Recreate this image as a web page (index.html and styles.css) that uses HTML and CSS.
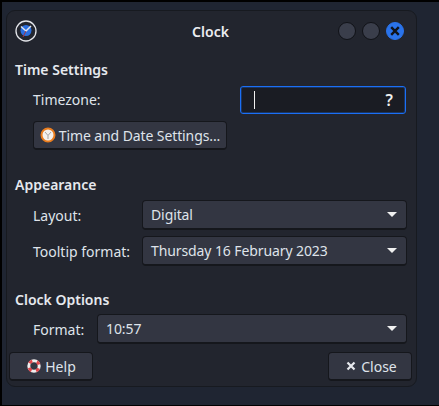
FILE: index.html
```html
<!DOCTYPE html>
<html lang="en">
<head>
	<meta charset="UTF-8">
	<title>Clock</title>
	<link rel="stylesheet" href="styles.css">
</head>
<body>
	<div class="window">
		<div class="titlebar">
			<svg class="app-icon" width="22" height="22" viewBox="0 0 22 22">
				<circle cx="11" cy="11" r="10" fill="#23262f" stroke="#e4e6ea" stroke-width="1.3"/>
				<circle cx="11" cy="10.5" r="5.5" fill="#2a6fe0"/>
				<path d="M6 6.5L11 11L16 6" fill="none" stroke="#dfe4ee" stroke-width="1.5"/>
				<path d="M11 11L8 17" stroke="#a8323c" stroke-width="1"/>
			</svg>
			<div class="title">Clock</div>
			<div class="win-btns">
				<span class="win-btn"></span>
				<span class="win-btn"></span>
				<span class="win-btn close">
					<svg width="10" height="10" viewBox="0 0 10 10"><path d="M1.2 1.2L8.8 8.8M8.8 1.2L1.2 8.8" stroke="#10131a" stroke-width="2.4"/></svg>
				</span>
			</div>
		</div>

		<h2 class="heading first">Time Settings</h2>
		<div class="row zone-row">
			<label class="zone-label">Timezone:</label>
			<div class="input"><span class="caret"></span><span class="hint">?</span></div>
		</div>
		<button class="btn settings-btn">
			<svg width="16" height="16" viewBox="0 0 16 16">
				<circle cx="8" cy="8" r="6.5" fill="#f5f1ec" stroke="#ea7d1e" stroke-width="2"/>
				<path d="M5 5L8 8.5L11 5M8 8.5V12" fill="none" stroke="#a5a2a0" stroke-width="1"/>
			</svg>
			Time and Date Settings...
		</button>

		<h2 class="heading appearance">Appearance</h2>
		<div class="row sel-row">
			<label class="w-long">Layout:</label>
			<div class="select"><span>Digital</span><i class="arrow"></i></div>
		</div>
		<div class="row sel-row tooltip-row">
			<label class="w-long">Tooltip format:</label>
			<div class="select"><span>Thursday 16 February 2023</span><i class="arrow"></i></div>
		</div>

		<h2 class="heading options">Clock Options</h2>
		<div class="row sel-row format-row">
			<label class="w-short">Format:</label>
			<div class="select"><span>10:57</span><i class="arrow"></i></div>
		</div>

		<div class="footer">
			<button class="btn foot-btn">
				<svg width="16" height="16" viewBox="0 0 16 16">
					<circle cx="8" cy="8" r="5.2" fill="none" stroke="#f0eeee" stroke-width="3"/>
					<circle cx="8" cy="8" r="5.2" fill="none" stroke="#e0474c" stroke-width="3" stroke-dasharray="3.4 4.77" stroke-dashoffset="-2.38"/>
				</svg>
				Help
			</button>
			<button class="btn foot-btn close-btn">
				<svg width="12" height="12" viewBox="0 0 12 12"><path d="M2.5 2.5L9.5 9.5M9.5 2.5L2.5 9.5" stroke="#e6e8ec" stroke-width="2.2"/></svg>
				Close
			</button>
		</div>
	</div>
</body>
</html>
```

FILE: styles.css
```css
*{
	margin: 0;
	padding: 0;
	box-sizing: border-box;
}
body{
	width: 439px;
	height: 406px;
	background: #1f2532;
	border: solid #000;
	border-width: 2px 0 1px 2px;
	font-family: "Noto Sans", sans-serif;
	font-size: 14px;
	color: #dfe3ea;
	overflow: hidden;
}
.window{
	width: 411px;
	height: 377px;
	margin: 8px 0 0 4px;
	padding: 0 4px 0 3px;
	background: #22252e;
	border: 1px solid #171a20;
	border-radius: 9px;
}
.titlebar{
	display: flex;
	align-items: center;
	height: 40px;
	padding: 0 8px 0 5px;
}
.title{
	flex: 1;
	text-align: center;
	font-weight: 600;
	font-size: 14px;
	color: #eceef2;
	padding-left: 46px;
}
.win-btns{
	display: flex;
	gap: 6px;
}
.win-btn{
	display: flex;
	align-items: center;
	justify-content: center;
	width: 18px;
	height: 18px;
	background: #3a3e4b;
	border: 1px solid #101217;
	border-radius: 50%;
}
.win-btn.close{
	background: #2a73ea;
	border-color: #2a73ea;
}
.heading{
	font-size: 14px;
	font-weight: 600;
	line-height: 20px;
	color: #e6e9ee;
	padding-left: 5px;
}
.heading.first{
	margin-top: 9px;
}
.heading.appearance{
	margin-top: 25px;
}
.heading.options{
	margin-top: 24px;
}
.row{
	display: flex;
	align-items: center;
}
.zone-row{
	justify-content: space-between;
	margin-top: 6px;
	padding: 0 6px 0 23px;
}
.zone-label{
	margin-bottom: 2px;
}
.input{
	display: flex;
	align-items: center;
	justify-content: space-between;
	width: 166px;
	height: 28px;
	padding: 0 12px 0 13px;
	background: #1a1c23;
	border: 1px solid #1b6ff5;
	border-radius: 3px;
	box-shadow: inset 0 0 0 1px rgba(27,111,245,0.3);
}
.caret{
	width: 1px;
	height: 18px;
	background: #f0f0f0;
}
.hint{
	font-size: 16px;
	font-weight: 600;
	color: #eee;
}
.btn{
	display: flex;
	align-items: center;
	justify-content: center;
	gap: 3px;
	height: 29px;
	font: inherit;
	color: #dfe3ea;
	background: #333642;
	border: 1px solid #15171c;
	border-bottom-width: 2px;
	border-radius: 4px;
}
.settings-btn{
	width: 194px;
	margin: 7px 0 0 23px;
	letter-spacing: -0.1px;
}
.sel-row{
	padding: 0 5px 0 23px;
	margin-top: 5px;
}
.tooltip-row{
	margin-top: 6px;
}
.format-row{
	margin-top: 4px;
}
.w-long{
	width: 109px;
}
.w-short{
	width: 64px;
}
.select{
	flex: 1;
	display: flex;
	align-items: center;
	justify-content: space-between;
	height: 30px;
	padding: 0 8px;
	letter-spacing: -0.1px;
	background: #333642;
	border: 1px solid #15171c;
	border-bottom-width: 2px;
	border-radius: 4px;
}
.arrow{
	width: 0;
	height: 0;
	margin-right: 1px;
	border: solid transparent;
	border-width: 5px 5px 0;
	border-top-color: #f0f0f0;
}
.footer{
	display: flex;
	justify-content: space-between;
	margin: 8px 0 0 -1px;
}
.foot-btn{
	width: 84px;
}
.close-btn{
	gap: 4px;
	padding-left: 2px;
}
```
